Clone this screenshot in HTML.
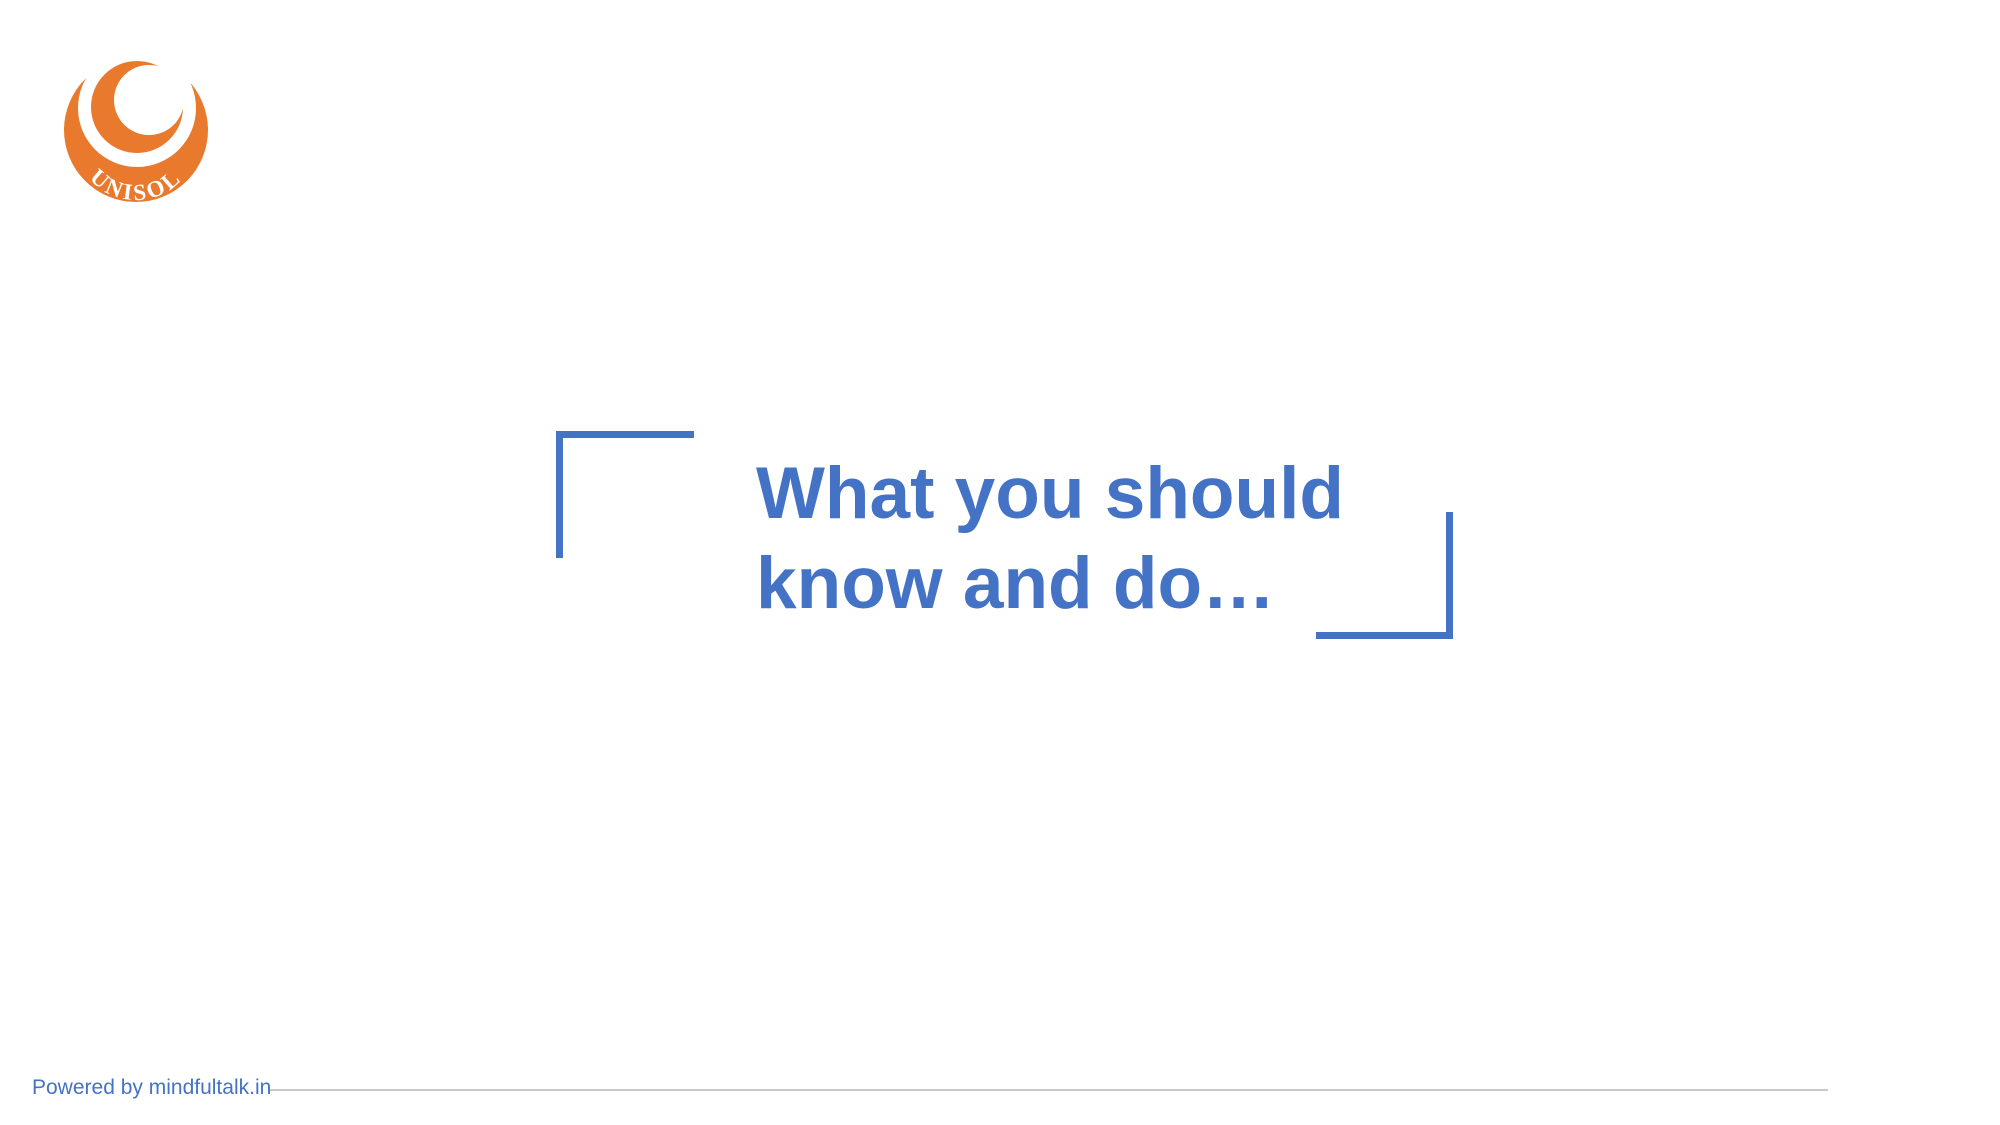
<!DOCTYPE html>
<html><head><meta charset="utf-8"><style>
html,body{margin:0;padding:0;background:#fff;}
body{width:2000px;height:1125px;position:relative;overflow:hidden;}
.b{position:absolute;background:#4472c4;}
.t{position:absolute;left:756px;top:449px;font-family:"Liberation Sans",sans-serif;font-weight:bold;font-size:73px;line-height:90px;color:#4472c4;white-space:nowrap;}
.f{position:absolute;left:32px;top:1076px;font-family:"Liberation Sans",sans-serif;font-size:21px;color:#4472c4;}
.l{position:absolute;left:270px;top:1089px;width:1558px;height:2px;background:#c8c8c8;}
</style></head><body>
<svg style="position:absolute;left:0;top:0" width="300" height="250">
<circle cx="136" cy="130" r="72" fill="#e97a2d"/>
<circle cx="137" cy="108" r="59" fill="#fff"/>
<circle cx="137" cy="107" r="46" fill="#e97a2d"/>
<circle cx="149" cy="100" r="35" fill="#fff"/>
<path d="M64 58 L208 58 L208 40 L64 40Z" fill="#fff"/>
<defs><path id="arc" d="M74 138 A62 62 0 0 0 198 138"/></defs>
<text font-family="Liberation Serif,serif" font-weight="bold" font-size="23" fill="#fff" letter-spacing="3"><textPath href="#arc" startOffset="50%" text-anchor="middle">UNISOL</textPath></text>
</svg>
<div class="b" style="left:556px;top:431px;width:138px;height:7px"></div>
<div class="b" style="left:556px;top:431px;width:7px;height:127px"></div>
<div class="b" style="left:1446px;top:512px;width:7px;height:127px"></div>
<div class="b" style="left:1316px;top:632px;width:137px;height:7px"></div>
<div class="t">What you should<br>know and do…</div>
<div class="l"></div>
<div class="f">Powered by mindfultalk.in</div>
</body></html>
